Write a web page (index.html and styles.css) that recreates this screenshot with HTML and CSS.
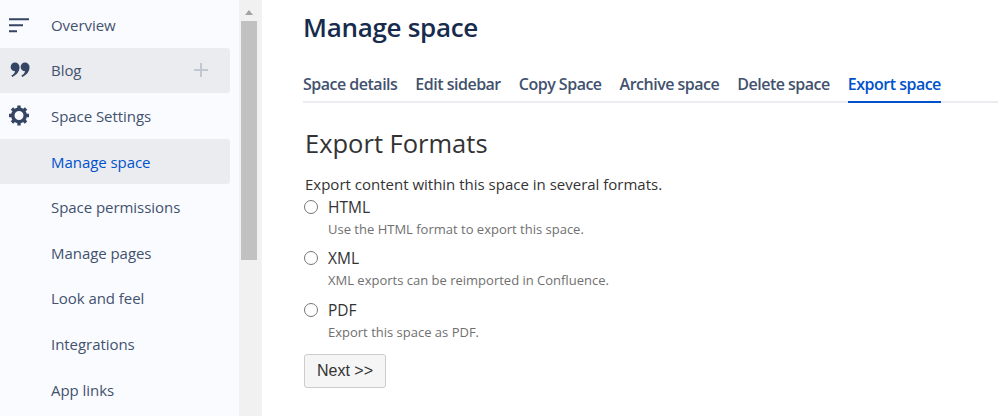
FILE: index.html
```html
<!DOCTYPE html>
<html lang="en">
<head>
<meta charset="utf-8">
<title>Manage space</title>
<link rel="stylesheet" href="styles.css">
</head>
<body>
<div class="page">
  <aside class="sidebar">
    <nav class="nav">
      <a class="row">
        <svg class="icon" viewBox="0 0 22 22"><path d="M1 5.200h20M1 11.200h14M1 17.200h8" fill="none" stroke="#344563" stroke-width="2"/></svg>
        <span>Overview</span>
      </a>
      <a class="row row-hover">
        <svg class="icon" viewBox="0 0 22 22"><path d="M7 3.500a4.500 4.500 0 0 1 4.500 4.800c0 4.500-3.200 8-7.300 9.700l-.8-1.400c2-1 3.400-2.500 3.700-4.300a4.400 4.400 0 1 1-.1-8.800zM17 3.500a4.500 4.500 0 0 1 4.500 4.800c0 4.500-3.200 8-7.300 9.700l-.8-1.400c2-1 3.400-2.500 3.700-4.300a4.400 4.400 0 1 1-.1-8.800z" fill="#344563"/></svg>
        <span>Blog</span>
        <svg class="plus" viewBox="0 0 14 14"><path d="M7 0v14M0 7h14" stroke="#c1c7d0" stroke-width="2" fill="none"/></svg>
      </a>
      <a class="row">
        <svg class="icon" viewBox="0 0 22 22"><circle cx="11" cy="10.500" r="6.200" fill="none" stroke="#344563" stroke-width="3.400"/><path d="M11 3.500V0.500M11 17.500v3M4 10.500H1M18 10.500h3M6.050 5.550L3.930 3.430M15.950 5.550l2.120-2.120M6.050 15.450l-2.120 2.120M15.950 15.450l2.120 2.120" stroke="#344563" stroke-width="3.400" fill="none"/></svg>
        <span>Space Settings</span>
      </a>
      <a class="row row-active"><span>Manage space</span></a>
      <a class="row"><span>Space permissions</span></a>
      <a class="row"><span>Manage pages</span></a>
      <a class="row"><span>Look and feel</span></a>
      <a class="row"><span>Integrations</span></a>
      <a class="row"><span>App links</span></a>
    </nav>
    <div class="scrollbar">
      <div class="arrow"></div>
      <div class="thumb"></div>
    </div>
  </aside>
  <main class="main">
    <h1 class="title">Manage space</h1>
    <ul class="tabs">
      <li class="tab">Space details</li>
      <li class="tab">Edit sidebar</li>
      <li class="tab">Copy Space</li>
      <li class="tab">Archive space</li>
      <li class="tab">Delete space</li>
      <li class="tab tab-active">Export space</li>
    </ul>
    <section class="content">
      <h2 class="heading">Export Formats</h2>
      <p class="intro">Export content within this space in several formats.</p>
      <label class="option">
        <input class="radio" type="radio" name="format">
        <span class="label">HTML</span>
        <span class="desc">Use the HTML format to export this space.</span>
      </label>
      <label class="option">
        <input class="radio" type="radio" name="format">
        <span class="label">XML</span>
        <span class="desc">XML exports can be reimported in Confluence.</span>
      </label>
      <label class="option">
        <input class="radio" type="radio" name="format">
        <span class="label">PDF</span>
        <span class="desc">Export this space as PDF.</span>
      </label>
      <button class="next" type="button">Next &gt;&gt;</button>
    </section>
  </main>
</div>
</body>
</html>
```
FILE: styles.css
```css
* { box-sizing: border-box; }
html, body { margin: 0; height: 100%; overflow: hidden; background: #fff; }
body { font-family: "Open Sans", "Noto Sans", sans-serif; color: #333; }
.page { display: flex; height: 416px; width: 998px; }

.sidebar { display: flex; width: 262px; flex: none; border-right: 2px solid #f1f2f4; background: #fafbff; overflow: hidden; }
.nav { width: 239px; flex: none; padding-top: 2px; display: flex; flex-direction: column; }
.row { display: flex; align-items: center; flex: none; height: 45.600px; width: 230px; padding-left: 51px; position: relative; font-size: 15px; letter-spacing: -0.050px; color: #42526e; border-radius: 0 3px 3px 0; }
.row-hover { background: #ebecf0; }
.row-active { background: #ebecf0; color: #0052cc; }
.icon { position: absolute; left: 8px; top: 50%; width: 22px; height: 22px; margin-top: -11px; }
.plus { position: absolute; left: 194px; top: 50%; width: 14px; height: 14px; margin-top: -7px; }

.scrollbar { flex: none; width: 21px; background: #f1f1f1; display: flex; flex-direction: column; align-items: center; padding-right: 1px; }
.arrow { width: 0; height: 0; margin: 10px 0 6px; border-left: 4px solid transparent; border-right: 4px solid transparent; border-bottom: 5px solid #a3a3a3; }
.thumb { width: 16px; height: 239px; background: #c1c1c1; }

.main { flex: 1; min-width: 0; padding: 10px 0 0 41px; }
.title { margin: 0; font-size: 26px; line-height: 34px; font-weight: 600; color: #172b4d; letter-spacing: -0.300px; }
.tabs { list-style: none; margin: 25px 0 0; padding: 0; display: flex; gap: 18px; border-bottom: 2px solid #ebecf0; height: 34px; }
.tab { font-size: 16px; line-height: 24px; font-weight: 600; color: #42526e; letter-spacing: -0.500px; padding: 3px 0 0; height: 34px; }
.tab-active { color: #0052cc; border-bottom: 2px solid #0052cc; }

.content { padding: 0 0 0 2px; }
.heading { margin: 23px 0 0; font-size: 25.500px; line-height: 34px; font-weight: 400; color: #333; }
.intro { margin: 14px 0 0; font-size: 15px; line-height: 20px; color: #333; }
.option { display: grid; grid-template-columns: 23px 1fr; margin-bottom: 7px; }
.option:first-of-type { margin-top: 1px; }
.option:nth-of-type(2) { margin-bottom: 8px; }
.radio { appearance: none; width: 14px; height: 14px; margin: 5px 0 0 -1px; border: 1px solid #767676; border-radius: 50%; background: #fff; }
.label { font-size: 15.500px; line-height: 24px; color: #333; }
.desc { grid-column: 2; font-size: 13px; line-height: 20px; color: #707070; }
.next { display: block; width: 82px; height: 34px; margin: 12px 0 0 -1px; padding: 0; background: #f5f5f5; border: 1px solid #ccc; border-radius: 3px; font-family: "Liberation Sans", Arial, sans-serif; font-size: 16px; color: #333; }
```
